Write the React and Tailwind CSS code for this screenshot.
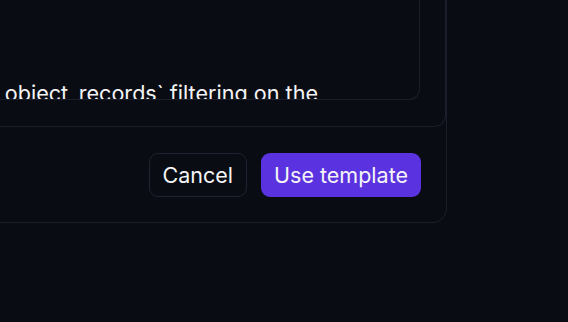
export default function App() {
  return (
    <div
      className="w-[568px] h-[322px] overflow-hidden bg-[#0a0c13]"
      style={{ fontFamily: "Inter, 'Noto Sans', sans-serif" }}
    >
      <div className="ml-[-300px] mt-[-101px] w-[747px] rounded-[14px] border border-[#1c1f2b] bg-[#0a0c13]">
        <div className="rounded-b-[12px] border border-t-0 border-[#1c1f2b] px-[25px] pb-[26px]">
          <div className="h-[200px] overflow-hidden rounded-b-[11px] border border-t-0 border-[#1c1f2b] flex flex-col justify-end">
            <div className="flex justify-end pr-[101px] mb-[-9px]">
              <p className="text-[21.6px] leading-[30px] text-[#f4f4f6] whitespace-nowrap">
                set `get_object_records` filtering on the
              </p>
            </div>
          </div>
        </div>
        <div className="flex justify-end gap-[14px] pt-[26px] pb-[25px] pr-[25px]">
          <button className="h-[44px] px-[13px] rounded-[9px] border border-[#1f2230] bg-[#0a0c13] text-[21.5px] text-[#f4f4f6]">
            Cancel
          </button>
          <button className="h-[44px] px-[13px] rounded-[9px] bg-[#5b32e0] text-[21.5px] text-[#f4f4f6]">
            Use template
          </button>
        </div>
      </div>
    </div>
  );
}
